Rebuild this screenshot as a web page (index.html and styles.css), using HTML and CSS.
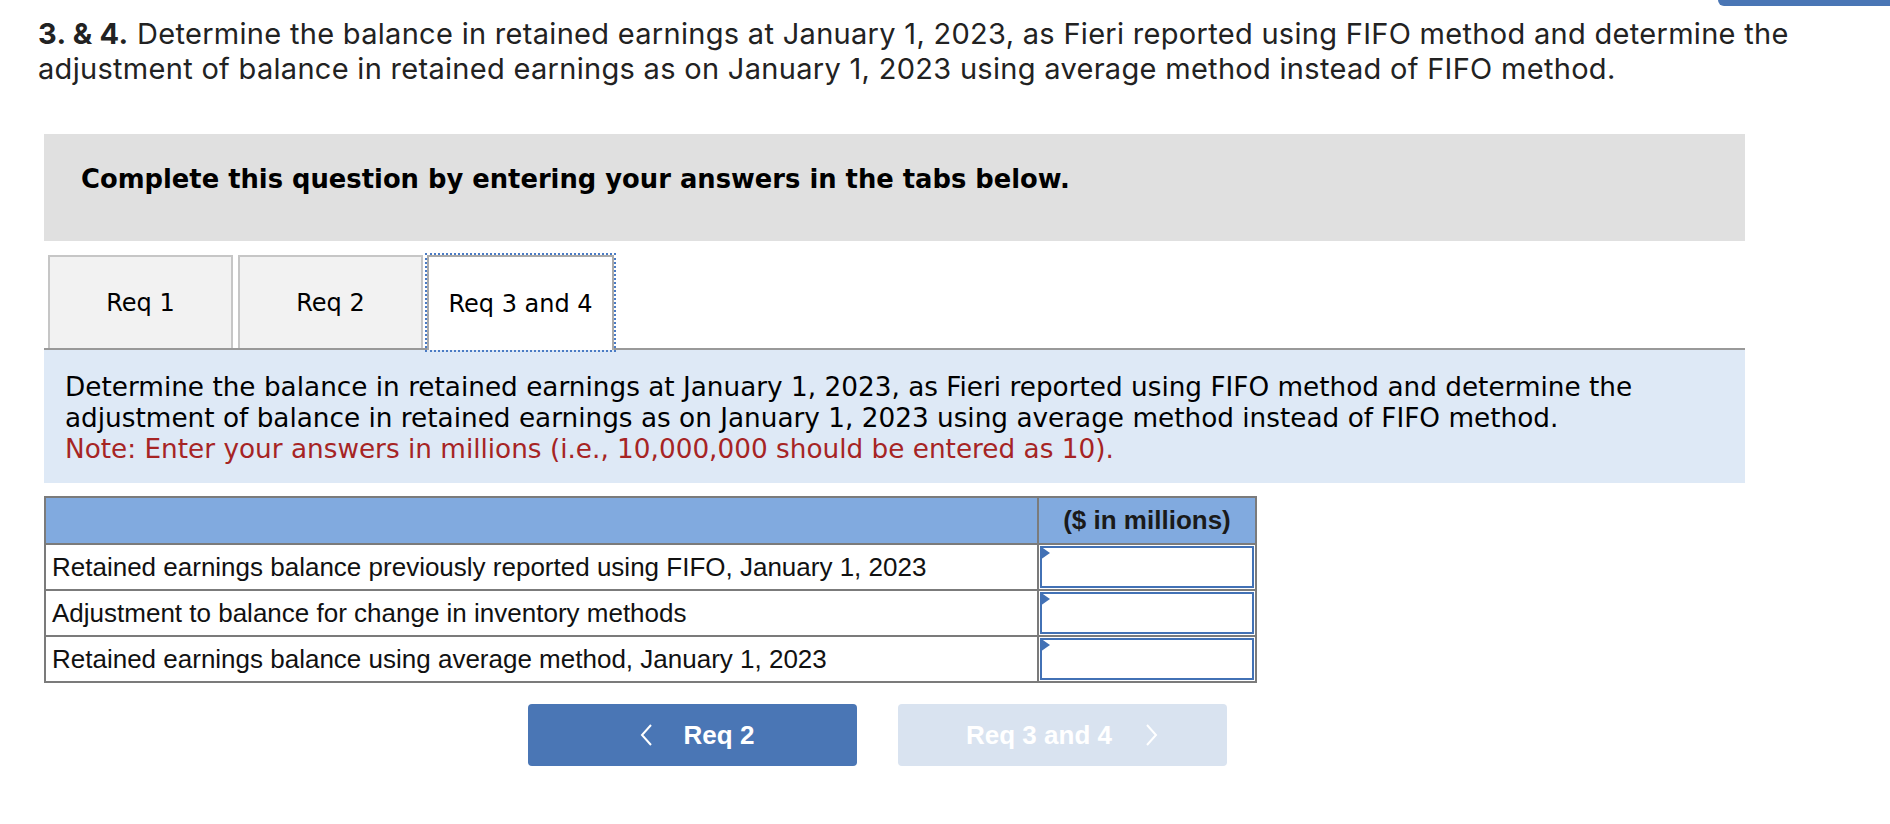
FILE: index.html
```html
<!DOCTYPE html>
<html lang="en">
<head>
<meta charset="utf-8">
<title>Req 3 and 4</title>
<link rel="stylesheet" href="styles.css">
</head>
<body>
<div class="topbar"></div>
<main class="page">
  <h1 class="prompt"><b>3. &amp; 4.</b> Determine the balance in retained earnings at January 1, 2023, as Fieri reported using FIFO method and determine the<br>adjustment of balance in retained earnings as on January 1, 2023 using average method instead of FIFO method.</h1>

  <section class="instructions">
    <p>Complete this question by entering your answers in the tabs below.</p>
  </section>

  <div class="tabs">
    <div class="tab">Req 1</div>
    <div class="tab">Req 2</div>
    <div class="tab active">Req 3 and 4</div>
  </div>

  <div class="panel">
    <p>Determine the balance in retained earnings at January 1, 2023, as Fieri reported using FIFO method and determine the<br>adjustment of balance in retained earnings as on January 1, 2023 using average method instead of FIFO method.<br><span class="note">Note: Enter your answers in millions (i.e., 10,000,000 should be entered as 10).</span></p>
  </div>

  <table class="grid">
    <colgroup><col class="label-col"><col class="val-col"></colgroup>
    <thead>
      <tr><th></th><th>($ in millions)</th></tr>
    </thead>
    <tbody>
      <tr><td class="label">Retained earnings balance previously reported using FIFO, January 1, 2023</td><td class="input-cell"><div class="input"></div></td></tr>
      <tr><td class="label">Adjustment to balance for change in inventory methods</td><td class="input-cell"><div class="input"></div></td></tr>
      <tr><td class="label">Retained earnings balance using average method, January 1, 2023</td><td class="input-cell"><div class="input"></div></td></tr>
    </tbody>
  </table>

  <div class="nav">
    <button class="btn prev"><svg class="chev" width="14" height="24" viewBox="0 0 14 24"><polyline points="12,2 3,12 12,22" fill="none" stroke="#fff" stroke-width="2"/></svg><span>Req 2</span></button>
    <button class="btn next"><span>Req 3 and 4</span><svg class="chev" width="14" height="24" viewBox="0 0 14 24"><polyline points="2,2 11,12 2,22" fill="none" stroke="#fff" stroke-width="2"/></svg></button>
  </div>
</main>
</body>
</html>
```

FILE: styles.css
```css
html, body {
  margin: 0;
  padding: 0;
  background: #fff;
}

.topbar {
  position: absolute;
  top: 0;
  right: 0;
  width: 172px;
  height: 6px;
  background: #4a76b5;
  border-bottom-left-radius: 6px;
}

.page {
  margin-left: 44px;
  width: 1701px;
}

.prompt {
  margin: 16px 0 0 -6px;
  font-family: Inter, "Open Sans", "Liberation Sans", sans-serif;
  font-weight: 400;
  font-size: 29px;
  letter-spacing: 0.3px;
  line-height: 35px;
  color: #222;
  white-space: nowrap;
}

.prompt b {
  font-weight: 700;
}

.instructions {
  margin-top: 48px;
  height: 107px;
  box-sizing: border-box;
  background: #e0e0e0;
  padding: 30px 0 0 37px;
}

.instructions p {
  margin: 0;
  font-family: "DejaVu Sans", Verdana, sans-serif;
  font-weight: 700;
  font-size: 25.8px;
  color: #000;
}

.tabs {
  margin-top: 14px;
  display: flex;
  gap: 5px;
  padding-left: 4px;
  border-bottom: 2px solid #999;
  height: 93px;
}

.tab {
  width: 185px;
  height: 93px;
  box-sizing: border-box;
  border: 2px solid #c6c6c6;
  border-bottom: none;
  background: #f2f2f2;
  display: flex;
  align-items: center;
  justify-content: center;
  font-family: "DejaVu Sans", Verdana, sans-serif;
  font-size: 24px;
  color: #000;
}

.tab.active {
  margin-left: -1px;
  height: 95px;
  width: 187px;
  background: #fff;
  border-color: #aaa;
  outline: 2px dotted #4a7bc4;
  position: relative;
}

.panel {
  height: 133px;
  box-sizing: border-box;
  background: #dee9f6;
  padding: 22px 0 0 21px;
}

.panel p {
  margin: 0;
  font-family: "DejaVu Sans", Verdana, sans-serif;
  font-size: 26.3px;
  line-height: 31px;
  color: #000;
  white-space: nowrap;
}

.panel .note {
  color: #a62424;
}

.grid {
  margin-top: 13px;
  width: 1211px;
  table-layout: fixed;
  border-collapse: collapse;
  font-family: "Liberation Sans", Arial, sans-serif;
  font-size: 26px;
  color: #111;
}

.grid .label-col {
  width: 993px;
}

.grid .val-col {
  width: 218px;
}

.grid th, .grid td {
  border: 2px solid #7b7b7b;
  padding: 0;
}

.grid thead th {
  height: 45px;
  background: #81aadf;
  font-weight: 700;
  text-align: center;
  color: #1a1a1a;
}

.grid .label {
  height: 44px;
  padding-left: 6px;
  text-align: left;
  white-space: nowrap;
}

.grid .input-cell {
  padding: 1px;
  background: #fff;
}

.input {
  position: relative;
  height: 38px;
  border: 2px solid #4271b5;
  background: #fff;
}

.input::before {
  content: "";
  position: absolute;
  top: -2px;
  left: -2px;
  border-top: 7px solid transparent;
  border-bottom: 7px solid transparent;
  border-left: 10px solid #4271b5;
}

.nav {
  margin-top: 21px;
  display: flex;
  gap: 41px;
  padding-left: 484px;
}

.btn {
  width: 329px;
  height: 62px;
  border: none;
  border-radius: 4px;
  display: flex;
  align-items: center;
  justify-content: center;
  gap: 31px;
  font-family: "Liberation Sans", Arial, sans-serif;
  font-weight: 700;
  font-size: 26px;
  color: #fff;
  padding: 0;
}

.btn.prev {
  background: #4a76b5;
  padding-left: 8px;
}

.btn.next {
  background: #d9e3f0;
  gap: 33px;
}
```
